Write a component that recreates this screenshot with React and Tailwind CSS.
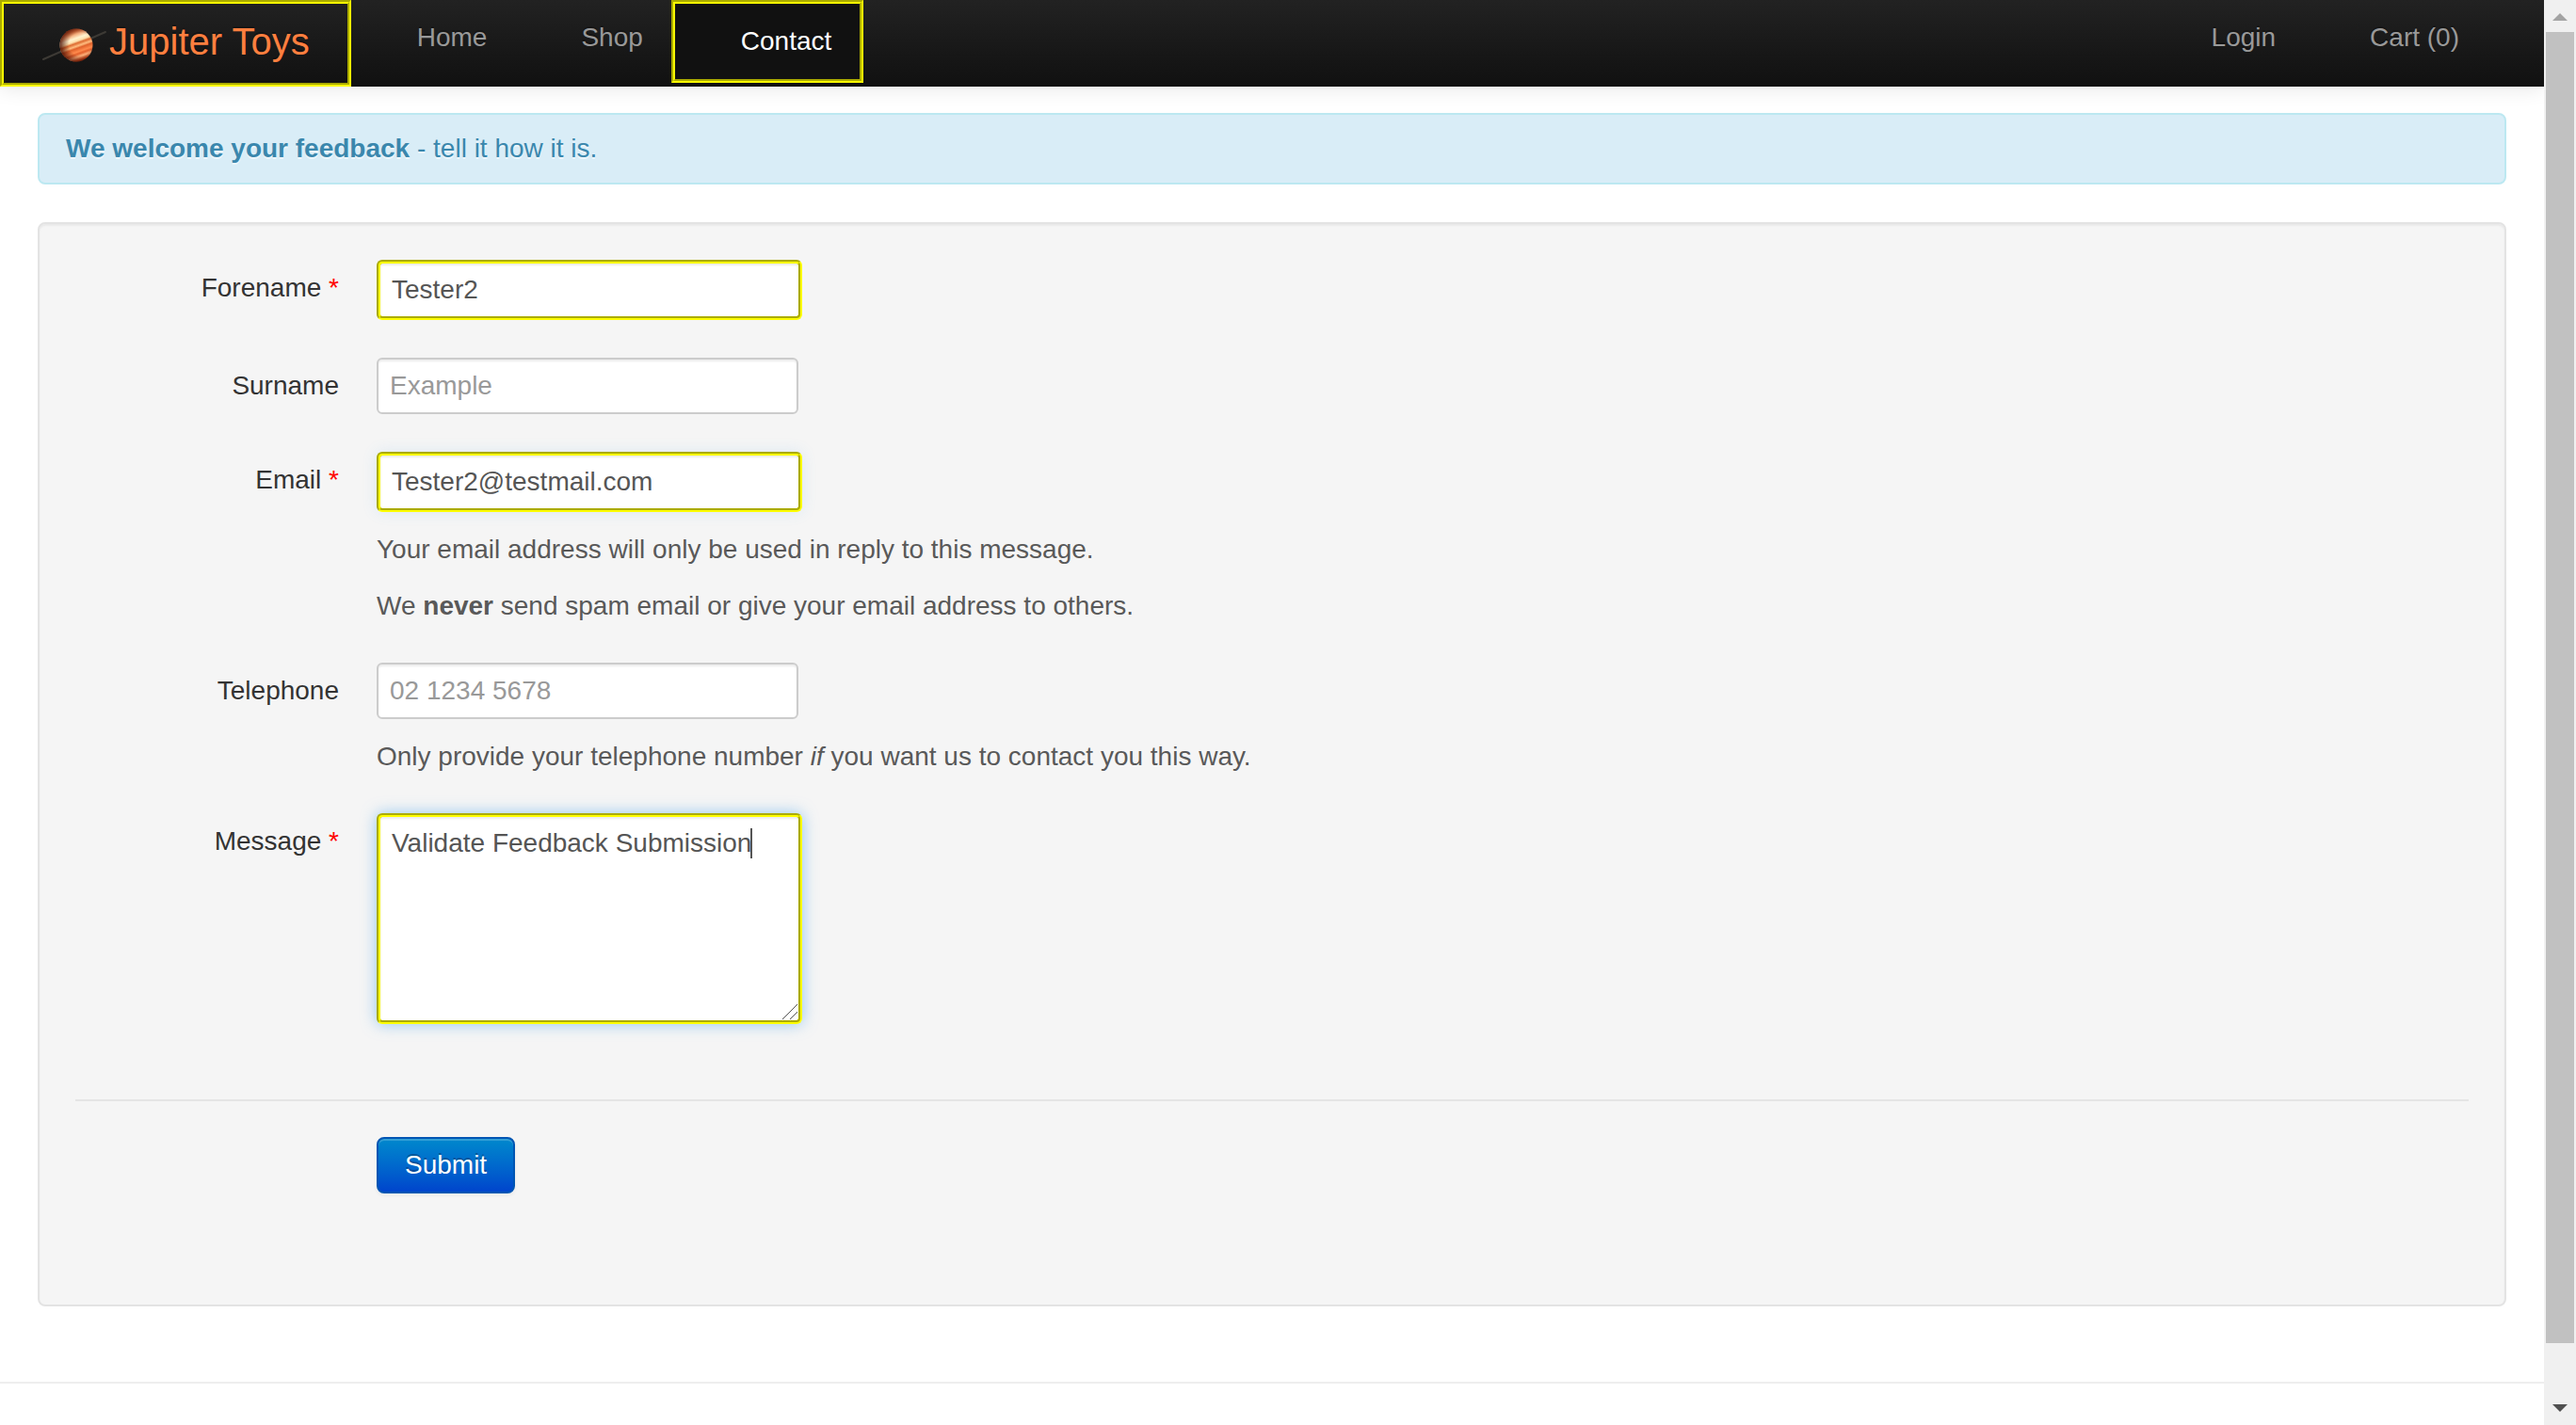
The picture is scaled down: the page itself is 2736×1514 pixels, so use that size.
const navLink = "block pt-5 pb-5 pl-[70px] pr-[30px] text-[#999999] [text-shadow:0_-2px_0_rgba(0,0,0,0.25)]";
const groove = "border-4 border-[#ffff00] [border-style:groove]";
const field = "block rounded-md bg-white px-3 py-2 text-[28px] leading-10 text-[#555555] placeholder:text-[#999999] outline-none";
const plain = "w-[448px] h-[60px] border-2 border-[#cccccc] shadow-[inset_0_2px_2px_rgba(0,0,0,0.075)]";

function Planet() {
  return (
    <svg viewBox="0 0 70 44" className="h-11 w-[70px]" aria-hidden="true">
      <defs>
        <linearGradient id="bands" x1="0.3" y1="0" x2="0.66" y2="1">
          <stop offset="0" stopColor="#8a3216" />
          <stop offset="0.12" stopColor="#d0683a" />
          <stop offset="0.22" stopColor="#f6b484" />
          <stop offset="0.32" stopColor="#fff3cf" />
          <stop offset="0.4" stopColor="#ffe0ac" />
          <stop offset="0.46" stopColor="#dd6a30" />
          <stop offset="0.54" stopColor="#ffbd80" />
          <stop offset="0.6" stopColor="#e0622c" />
          <stop offset="0.7" stopColor="#ff8a4c" />
          <stop offset="0.76" stopColor="#e2602c" />
          <stop offset="0.84" stopColor="#ffb27c" />
          <stop offset="0.93" stopColor="#c94a1e" />
          <stop offset="1" stopColor="#6b1f0c" />
        </linearGradient>
        <radialGradient id="shade" cx="0.62" cy="0.47" r="0.62">
          <stop offset="0.55" stopColor="#4a1004" stopOpacity="0" />
          <stop offset="1" stopColor="#4a1004" stopOpacity="0.85" />
        </radialGradient>
      </defs>
      <path d="M2 39 L68 10" stroke="#3d3a35" strokeWidth="2" strokeLinecap="round" />
      <circle cx="37" cy="24" r="17.5" fill="url(#bands)" />
      <circle cx="37" cy="24" r="17.5" fill="url(#shade)" />
    </svg>
  );
}

function Row({ id, label, required, children }) {
  return (
    <div className="mb-10 flex gap-10">
      <label htmlFor={id} className="w-[280px] shrink-0 pt-[10px] text-right text-[#333333]">
        {label}
        {required && <span className="text-[#ff0000]"> *</span>}
      </label>
      <div className="flex min-w-0 flex-col gap-5 text-[#595959]">{children}</div>
    </div>
  );
}

export default function App() {
  return (
    <div className="flex h-screen overflow-hidden bg-white font-['Liberation_Sans',Arial,sans-serif] text-[28px] leading-10 text-[#333333]">
      <div className="flex min-w-0 flex-1 flex-col overflow-hidden">
        <header className="flex h-[92px] shrink-0 items-start border-b-2 border-[#0c0c0c] bg-linear-to-b from-[#222222] to-[#111111] pr-[60px] shadow-[0_2px_20px_rgba(0,0,0,0.1)]">
          <a href="#home" className={`flex h-[92px] items-start gap-[2px] px-10 pt-5 text-[40px] text-[#ff7f3f] ${groove}`}>
            <Planet />
            <span className="[text-shadow:0_-2px_0_rgba(0,0,0,0.25)]">Jupiter Toys</span>
          </a>
          <nav className="flex flex-1 items-start">
            <a href="#home" className={navLink}>Home</a>
            <a href="#shop" className={navLink}>Shop</a>
            <a
              href="#contact"
              className={`block bg-[#111111] pt-5 pb-5 pl-[70px] pr-[30px] text-white ${groove}`}
            >
              Contact
            </a>
            <a href="#login" className={`ml-auto ${navLink}`}>Login</a>
            <a href="#cart" className={navLink}>Cart (0)</a>
          </nav>
        </header>

        <main className="px-10 pt-7">
          <div className="mb-10 rounded-lg border-2 border-[#bce8f1] bg-[#d9edf7] px-7 py-4 text-[#3a87ad] [text-shadow:0_2px_0_rgba(255,255,255,0.5)]">
            <strong>We welcome your feedback</strong> - tell it how it is.
          </div>

          <form className="rounded-lg border-2 border-[#e3e3e3] bg-[#f5f5f5] p-[38px] shadow-[inset_0_2px_2px_rgba(0,0,0,0.05)]">
            <Row id="forename" label="Forename" required>
              <input
                id="forename"
                type="text"
                defaultValue="Tester2"
                className={`w-[452px] h-16 ${field} ${groove} shadow-[inset_0_2px_2px_rgba(0,0,0,0.075)]`}
              />
            </Row>
            <Row id="surname" label="Surname">
              <input id="surname" type="text" placeholder="Example" className={`${field} ${plain}`} />
            </Row>
            <Row id="email" label="Email" required>
              <input
                id="email"
                type="email"
                defaultValue="Tester2@testmail.com"
                className={`w-[452px] h-16 ${field} ${groove} shadow-[inset_0_2px_2px_rgba(0,0,0,0.075),0_0_16px_rgba(82,168,236,0.15)]`}
              />
              <p>Your email address will only be used in reply to this message.</p>
              <p>
                We <strong>never</strong> send spam email or give your email address to others.
              </p>
            </Row>
            <Row id="telephone" label="Telephone">
              <input id="telephone" type="tel" placeholder="02 1234 5678" className={`${field} ${plain}`} />
              <p>
                Only provide your telephone number <em>if</em> you want us to contact you this way.
              </p>
            </Row>
            <Row id="message" label="Message" required>
              <div className="relative">
                <textarea
                  id="message"
                  defaultValue="Validate Feedback Submission"
                  className={`w-[452px] h-[224px] resize-none ${field} ${groove} shadow-[inset_0_2px_2px_rgba(0,0,0,0.075),0_0_16px_rgba(82,168,236,0.6)]`}
                />
                <span className="absolute top-4 left-[397px] h-8 w-[2px] bg-[#555555]" />
                <svg viewBox="0 0 18 18" className="absolute right-1 bottom-1 h-[18px] w-[18px]" aria-hidden="true">
                  <path d="M1 17 L17 1 M9 17 L17 9" stroke="#555555" strokeWidth="1" />
                </svg>
              </div>
            </Row>
            <div className="mt-20 mb-10 border-t-2 border-[#e5e5e5] pt-[38px] pb-10 pl-[320px]">
              <button
                type="submit"
                className="block rounded-lg border-2 border-[#0055b3] bg-linear-to-b from-[#0088cc] to-[#0044cc] px-7 py-2 text-white shadow-[inset_0_2px_0_rgba(255,255,255,0.2),0_2px_4px_rgba(0,0,0,0.05)] [text-shadow:0_-2px_0_rgba(0,0,0,0.25)]"
              >
                Submit
              </button>
            </div>
          </form>
        </main>
        <hr className="mt-20 border-t-2 border-[#eeeeee]" />
      </div>

      <div className="flex w-[34px] shrink-0 flex-col bg-[#f0f0f0] px-[2px]" aria-hidden="true">
        <svg viewBox="0 0 30 34" className="h-[34px] w-[30px] shrink-0">
          <path d="M15 14 L23 22 H7 Z" fill="#a3a3a3" />
        </svg>
        <div className="flex-[1393] bg-[#c1c1c1]" />
        <div className="flex-[53]" />
        <svg viewBox="0 0 30 34" className="h-[34px] w-[30px] shrink-0">
          <path d="M7 12 H23 L15 20 Z" fill="#505050" />
        </svg>
      </div>
    </div>
  );
}
